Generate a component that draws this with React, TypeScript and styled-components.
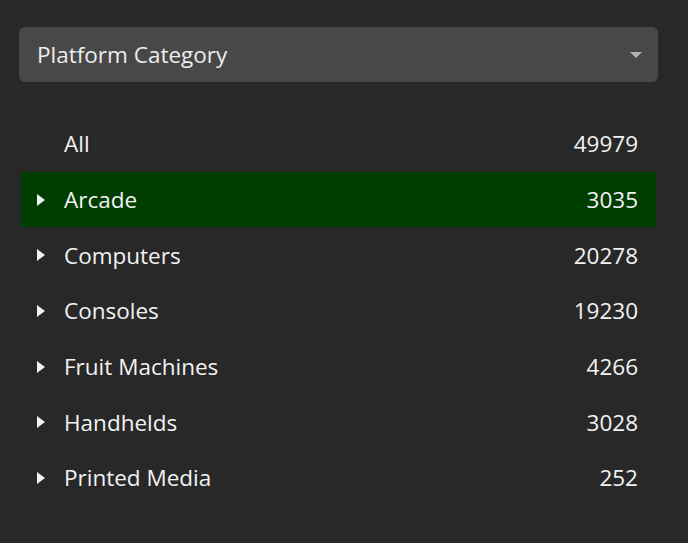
import * as React from 'react'
import styled, {createGlobalStyle} from 'styled-components'

const GlobalStyle = createGlobalStyle`
  html, body {
    margin: 0;
    padding: 0;
    background: #282828;
  }
  body {
    font-family: "Open Sans", "Noto Sans", sans-serif;
    color: #f2f2f2;
  }
`

const Panel = styled.div`
  width: 688px;
  height: 543px;
  box-sizing: border-box;
  padding: 27px 30px 0 19px;
  display: flex;
  flex-direction: column;
`

const Select = styled.div`
  height: 55px;
  border-radius: 6px;
  background: #484848;
  display: flex;
  align-items: center;
  justify-content: space-between;
  padding: 0 16px 0 18px;
  font-size: 22.5px;
  color: #ededed;
`

const Caret = styled.span`
  width: 0;
  height: 0;
  margin-top: 1px;
  border-left: 6px solid transparent;
  border-right: 6px solid transparent;
  border-top: 6px solid #b4b4b4;
`

const List = styled.ul`
  list-style: none;
  margin: 34px 2px 0 2px;
  padding: 0;
`

const Row = styled.li<{$selected?: boolean}>`
  height: 55.7px;
  display: grid;
  grid-template-columns: 27px 1fr auto;
  align-items: center;
  padding: 0 18px 0 16px;
  font-size: 22.5px;
  background: ${p => (p.$selected ? '#003d00' : 'transparent')};
`

const Arrow = styled.span`
  width: 0;
  height: 0;
  border-top: 6px solid transparent;
  border-bottom: 6px solid transparent;
  border-left: 8px solid #f2f2f2;
`

const Label = styled.span``

const Count = styled.span`
  text-align: right;
`

type TItem = {
  name: string
  count: number
  expandable: boolean
}

const items: TItem[] = [
  {name: 'All', count: 49979, expandable: false},
  {name: 'Arcade', count: 3035, expandable: true},
  {name: 'Computers', count: 20278, expandable: true},
  {name: 'Consoles', count: 19230, expandable: true},
  {name: 'Fruit Machines', count: 4266, expandable: true},
  {name: 'Handhelds', count: 3028, expandable: true},
  {name: 'Printed Media', count: 252, expandable: true},
]

const App: React.FC = () => {
  const [selected, setSelected] = React.useState('Arcade')

  return (
    <Panel>
      <GlobalStyle />
      <Select>
        <span>Platform Category</span>
        <Caret />
      </Select>
      <List>
        {items.map(item => (
          <Row
            key={item.name}
            $selected={item.name === selected}
            onClick={() => setSelected(item.name)}
          >
            {item.expandable ? <Arrow /> : <span />}
            <Label>{item.name}</Label>
            <Count>{item.count}</Count>
          </Row>
        ))}
      </List>
    </Panel>
  )
}

export default App
